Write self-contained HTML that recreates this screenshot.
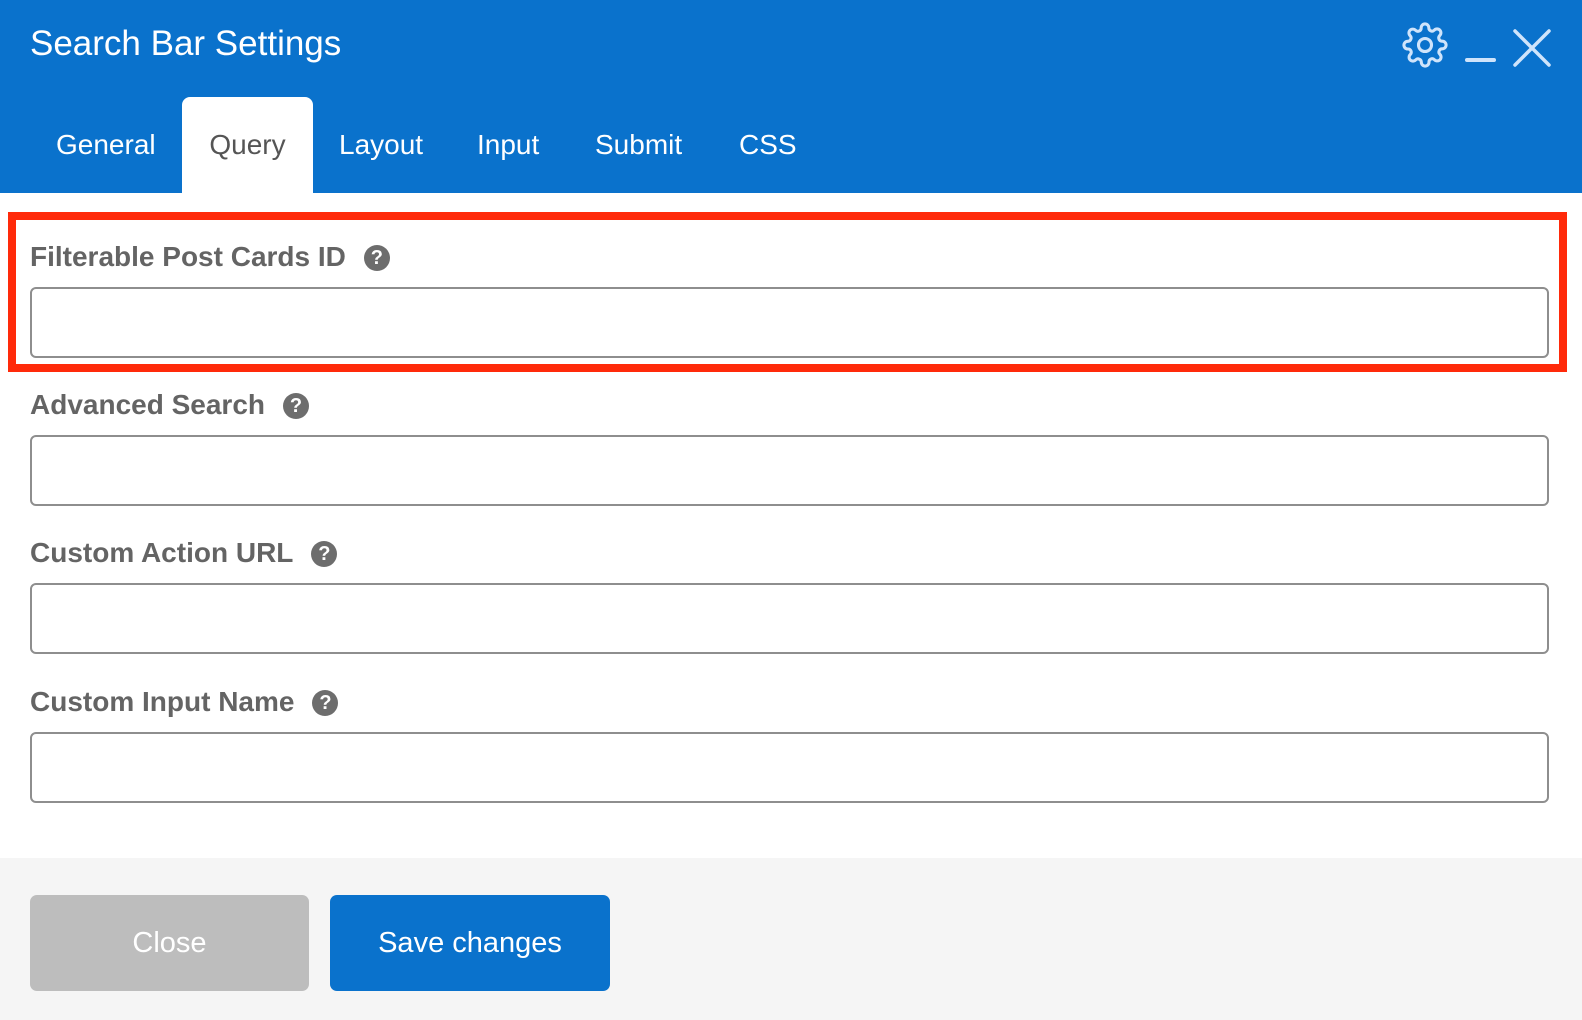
<!DOCTYPE html>
<html><head><meta charset="utf-8"><style>
*{box-sizing:border-box;margin:0;padding:0}
body{width:1582px;height:1020px;background:#fff;font-family:"Liberation Sans",sans-serif;position:relative;overflow:hidden}
.hdr{position:absolute;left:0;top:0;width:1582px;height:193px;background:#0a72cc}
.title{position:absolute;left:30px;top:24px;color:#fff;font-size:35px}
.tab{position:absolute;top:129px;color:#fff;font-size:28px}
.tab.on{top:97px;left:182px;width:131px;height:96px;background:#fff;border-radius:8px 8px 0 0;color:#555;text-align:center;padding-top:32px}
.red{position:absolute;left:8px;top:212px;width:1559px;height:160px;border:8px solid #ff2a0a}
.lbl{position:absolute;left:30px;font-size:28px;font-weight:bold;color:#646464}
.q{display:inline-block;width:26px;height:26px;border-radius:50%;background:#6d6d6d;color:#fff;font-size:20px;text-align:center;line-height:26px;vertical-align:2px;margin-left:18px}
.inp{position:absolute;left:30px;width:1519px;height:71px;border:2px solid #8e8e8e;border-radius:6px;background:#fff}
.ftr{position:absolute;left:0;top:858px;width:1582px;height:162px;background:#f5f5f5}
.btn{position:absolute;top:895px;height:96px;border-radius:7px;color:#fff;font-size:29px;text-align:center;line-height:96px}
</style></head><body>
<div class="hdr">
<div class="title">Search Bar Settings</div>
<svg style="position:absolute;left:1402px;top:22px" width="46" height="46" viewBox="0 0 24 24" fill="none" stroke="#cfe4fb" stroke-width="1.6" stroke-linecap="round" stroke-linejoin="round"><circle cx="12" cy="12" r="3.4"/><path d="M19.4 15a1.65 1.65 0 0 0 .33 1.82l.06.06a2 2 0 0 1 0 2.83 2 2 0 0 1-2.83 0l-.06-.06a1.65 1.65 0 0 0-1.82-.33 1.65 1.65 0 0 0-1 1.51V21a2 2 0 0 1-2 2 2 2 0 0 1-2-2v-.09A1.65 1.65 0 0 0 9 19.4a1.65 1.65 0 0 0-1.82.33l-.06.06a2 2 0 0 1-2.83 0 2 2 0 0 1 0-2.83l.06-.06a1.65 1.65 0 0 0 .33-1.82 1.65 1.65 0 0 0-1.51-1H3a2 2 0 0 1-2-2 2 2 0 0 1 2-2h.09A1.65 1.65 0 0 0 4.6 9a1.65 1.65 0 0 0-.33-1.82l-.06-.06a2 2 0 0 1 0-2.83 2 2 0 0 1 2.83 0l.06.06a1.65 1.65 0 0 0 1.82.33H9a1.65 1.65 0 0 0 1-1.51V3a2 2 0 0 1 2-2 2 2 0 0 1 2 2v.09a1.65 1.65 0 0 0 1 1.51 1.65 1.65 0 0 0 1.82-.33l.06-.06a2 2 0 0 1 2.83 0 2 2 0 0 1 0 2.83l-.06.06a1.65 1.65 0 0 0-.33 1.82V9a1.65 1.65 0 0 0 1.51 1H21a2 2 0 0 1 2 2 2 2 0 0 1-2 2h-.09a1.65 1.65 0 0 0-1.51 1z"/></svg>
<div style="position:absolute;left:1465px;top:58px;width:31px;height:4px;background:#cfe4fb;border-radius:2px"></div>
<svg style="position:absolute;left:1512px;top:28px" width="40" height="40" viewBox="0 0 40 40" stroke="#cfe4fb" stroke-width="3.5" stroke-linecap="round"><path d="M3 3L37 37M37 3L3 37"/></svg>
<div class="tab" style="left:56px">General</div>
<div class="tab on">Query</div>
<div class="tab" style="left:339px">Layout</div>
<div class="tab" style="left:477px">Input</div>
<div class="tab" style="left:595px">Submit</div>
<div class="tab" style="left:739px">CSS</div>
</div>
<div class="red"></div>
<div class="lbl" style="top:241px">Filterable Post Cards ID<span class="q">?</span></div>
<div class="inp" style="top:287px"></div>
<div class="lbl" style="top:389px">Advanced Search<span class="q">?</span></div>
<div class="inp" style="top:435px"></div>
<div class="lbl" style="top:537px">Custom Action URL<span class="q">?</span></div>
<div class="inp" style="top:583px"></div>
<div class="lbl" style="top:686px">Custom Input Name<span class="q">?</span></div>
<div class="inp" style="top:732px"></div>
<div class="ftr"></div>
<div class="btn" style="left:30px;width:279px;background:#bdbdbd">Close</div>
<div class="btn" style="left:330px;width:280px;background:#0a72cc">Save changes</div>
</body></html>
